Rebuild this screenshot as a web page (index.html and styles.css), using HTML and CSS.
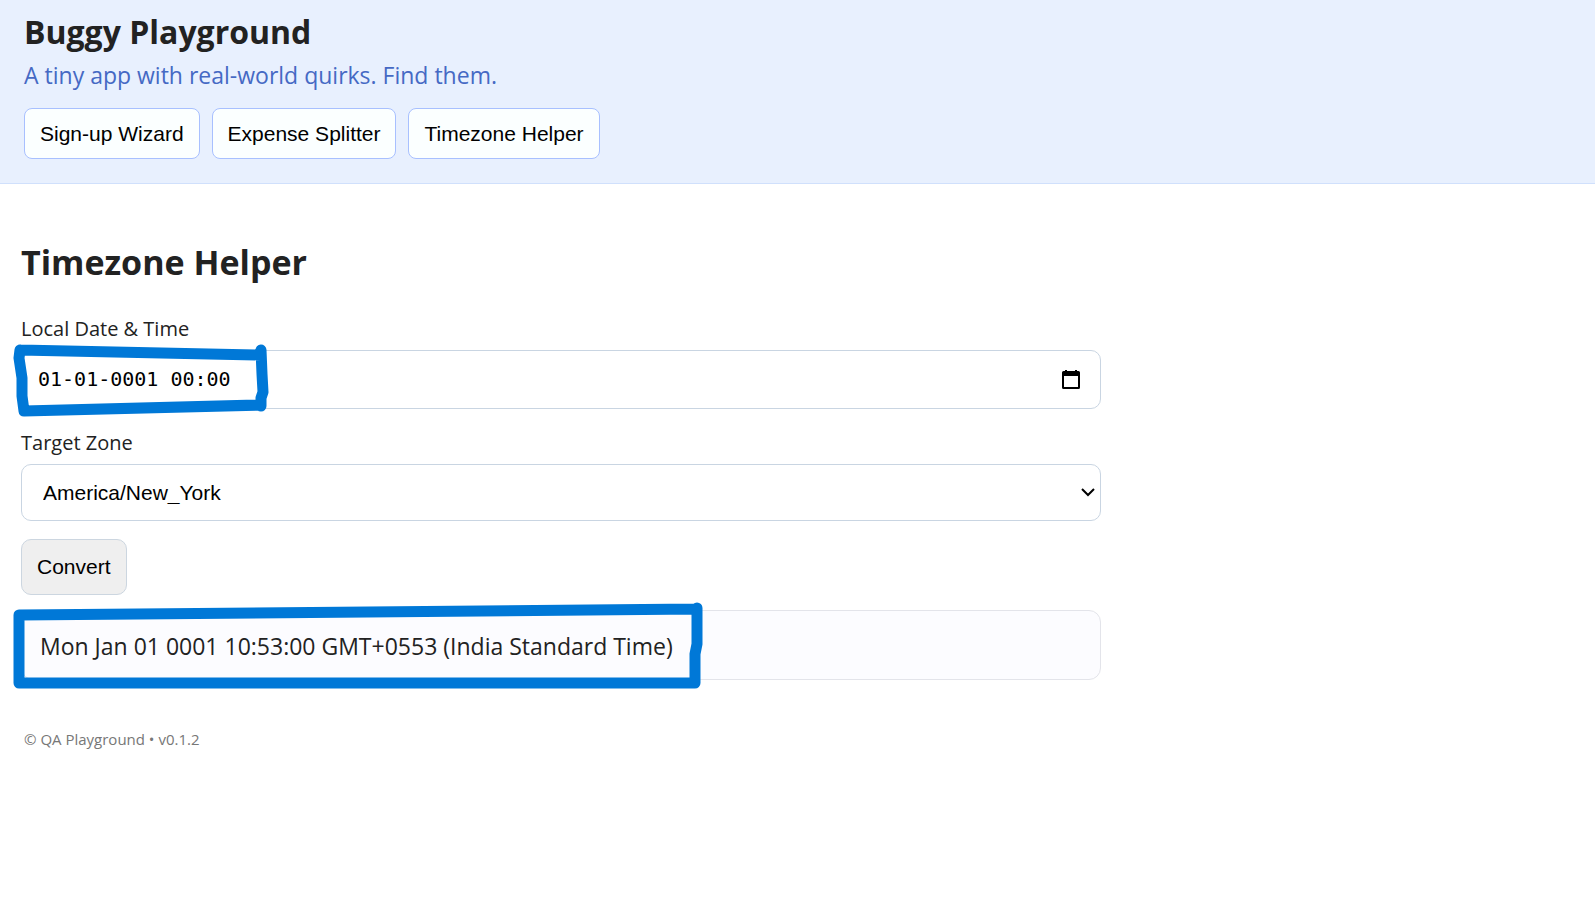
FILE: index.html
```html
<!DOCTYPE html>
<html lang="en">
<head>
<meta charset="utf-8">
<meta name="viewport" content="width=device-width, initial-scale=1">
<title>Buggy Playground</title>
<link rel="stylesheet" href="styles.css">
</head>
<body>
<header class="header">
  <h1 class="brand">Buggy Playground</h1>
  <p class="tagline">A tiny app with real-world quirks. Find them.</p>
  <nav class="nav">
    <button class="tab" type="button">Sign-up Wizard</button>
    <button class="tab" type="button">Expense Splitter</button>
    <button class="tab" type="button">Timezone Helper</button>
  </nav>
</header>
<main class="main">
  <h2 class="title">Timezone Helper</h2>
  <form class="form">
    <label class="label" for="local">Local Date &amp; Time</label>
    <div class="field">
      <input class="control date" id="local" type="text" value="01-01-0001 00:00">
      <svg class="icon calendar" viewBox="0 0 18 19" width="18" height="19" aria-hidden="true"><path fill="#000" fill-rule="evenodd" d="M3 0h2v1h8V0h2v1h1.500q1.500 0 1.500 1.500v15q0 1.500-1.500 1.500h-15Q0 19 0 17.500v-15Q0 1 1.500 1H3zM2 6v11h14V6z"/></svg>
      <svg class="mark" viewBox="0 0 260 80" width="260" height="80" aria-hidden="true"><path d="M7 8L248 13M7 8L6 16L9 36L9 54L11 69L248 63M248 8L249 32L250 50L248 56L248 64"/></svg>
    </div>
    <label class="label second" for="zone">Target Zone</label>
    <div class="field">
      <select class="control zone" id="zone"><option>America/New_York</option></select>
      <svg class="icon chevron" viewBox="0 0 14 9" width="14" height="9" aria-hidden="true"><path fill="none" stroke="#000" stroke-width="2" d="M1 1l6 6 6-6"/></svg>
    </div>
    <button class="convert" type="button">Convert</button>
    <div class="field">
      <output class="result">Mon Jan 01 0001 10:53:00 GMT+0553 (India Standard Time)</output>
      <svg class="mark" viewBox="0 0 691 88" width="691" height="88" aria-hidden="true"><path d="M6 13L684 7M6 13V81H682V54M684 6V42L682 52V81"/></svg>
    </div>
  </form>
</main>
<footer class="footer">© QA Playground • v0.1.2</footer>
</body>
</html>
```
FILE: styles.css
```css
* { box-sizing: border-box; }
body {
  margin: 0;
  background: #fff;
  color: #222;
  font-family: "Segoe UI", "Open Sans", "Noto Sans", sans-serif;
}
h1, h2, p { margin: 0; }
button, select { font-family: Arial, "Liberation Sans", sans-serif; font-size: 21px; color: #000; }
.header {
  padding: 12px 24px 24px;
  background: #e8f0fe;
  border-bottom: 1px solid #d0e0fc;
}
.brand { font-size: 32px; line-height: 40px; }
.tagline { margin-top: 7px; font-size: 23px; line-height: 32px; color: #4569c4; }
.nav { display: flex; flex-wrap: wrap; gap: 12px; margin-top: 17px; }
.tab {
  padding: 12px 15px;
  line-height: 25px;
  background: #fbffff;
  border: 1px solid #a8c0ff;
  border-radius: 8px;
}
.main { max-width: 1122px; padding: 54px 21px 0; }
.title { font-size: 34px; line-height: 48px; }
.form { display: flex; flex-direction: column; margin-top: 28px; }
.label { margin-bottom: 6px; font-size: 20px; line-height: 30px; }
.second { margin-top: 19px; }
.field { position: relative; display: grid; align-items: center; }
.control {
  width: 100%;
  background: #fff;
  border: 1px solid #c9d5e2;
  border-radius: 10px;
  appearance: none;
}
.date {
  padding: 16px;
  font: 20px/25px "DejaVu Sans Mono", monospace;
  color: #000;
}
.zone { padding: 16px 21px; line-height: 23px; }
.icon { position: absolute; pointer-events: none; }
.calendar { right: 21px; }
.chevron { right: 6px; }
.convert {
  align-self: flex-start;
  margin: 18px 0 15px;
  padding: 15px;
  line-height: 24px;
  background: #efefef;
  border: 1px solid #ccd6e0;
  border-radius: 10px;
}
.result {
  padding: 19px 18px 17px;
  font-size: 23px;
  line-height: 32px;
  background: #fcfcff;
  border: 1px solid #e3e4ea;
  border-radius: 12px;
}
.mark {
  position: absolute;
  top: -8px;
  left: -8px;
  fill: none;
  stroke: #0078d7;
  stroke-width: 11px;
  stroke-linecap: round;
  stroke-linejoin: round;
  pointer-events: none;
}
.footer { padding: 48px 24px 24px; font-size: 15px; line-height: 22px; color: #777; }
```
